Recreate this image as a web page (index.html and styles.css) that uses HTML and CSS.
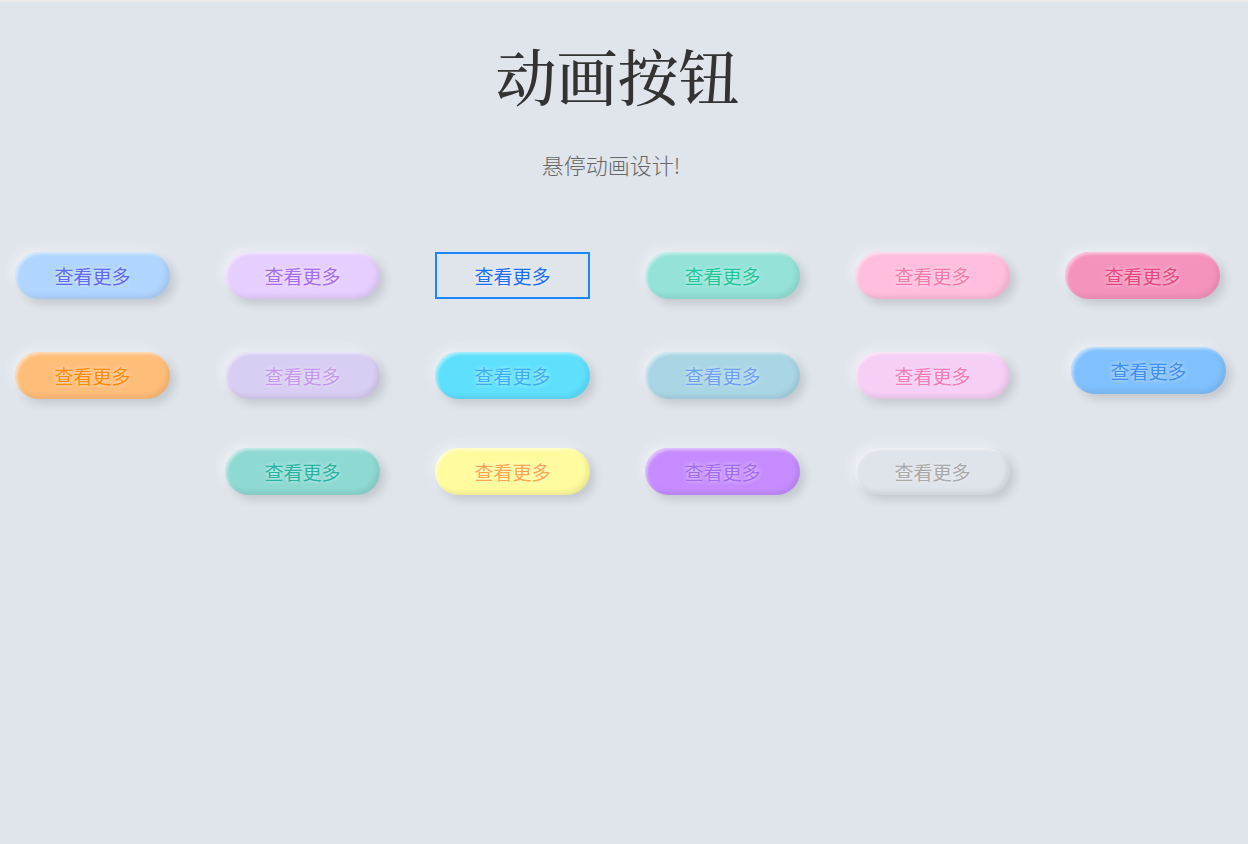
FILE: index.html
```html
<!DOCTYPE html>
<html lang="zh-CN">
<head>
  <meta charset="UTF-8">
  <meta name="viewport" content="width=device-width, initial-scale=1.0">
  <title>动画按钮</title>
  <link rel="stylesheet" href="styles.css">
</head>
<body>
  <div class="header">
    <h1 class="title">动画按钮</h1>
    <p class="subtitle">悬停动画设计!</p>
  </div>

  <div class="buttons">
    <div class="row">
      <button class="btn btn-blue">查看更多</button>
      <button class="btn btn-violet">查看更多</button>
      <button class="btn btn-outline">查看更多</button>
      <button class="btn btn-teal">查看更多</button>
      <button class="btn btn-pink">查看更多</button>
      <button class="btn btn-rose">查看更多</button>
    </div>
    <div class="row row-2">
      <button class="btn btn-orange">查看更多</button>
      <button class="btn btn-lavender">查看更多</button>
      <button class="btn btn-cyan">查看更多</button>
      <button class="btn btn-steel">查看更多</button>
      <button class="btn btn-orchid">查看更多</button>
      <button class="btn btn-sky btn-lift">查看更多</button>
    </div>
    <div class="row row-3">
      <button class="btn btn-mint">查看更多</button>
      <button class="btn btn-yellow">查看更多</button>
      <button class="btn btn-purple">查看更多</button>
      <button class="btn btn-gray">查看更多</button>
    </div>
  </div>
</body>
</html>
```

FILE: styles.css
```css
body {
  margin: 0;
  padding: 0;
  border-top: 2px solid #ebebeb;
  background-color: #e0e5ec;
  font-family: "Noto Sans CJK SC", "Noto Sans", sans-serif;
  min-height: 842px;
}
.header {
  text-align: center;
  padding: 33px 13px 0 0;
}
.title {
  margin: 0;
  font-family: "Noto Serif CJK SC", "Liberation Serif", "Noto Sans CJK SC", serif;
  font-size: 61px;
  font-weight: 500;
  line-height: 80px;
  color: #333;
}
.subtitle {
  margin: 34px 0 0;
  padding-right: 13px;
  font-size: 22px;
  font-weight: 300;
  line-height: 30px;
  color: #666;
}
.buttons {
  padding: 73px 0 0 15px;
}
.row {
  display: flex;
  gap: 55px;
  margin-bottom: 53px;
}
.row-2 {
  margin-bottom: 49px;
}
.row-3 {
  padding-left: 210px;
}
.btn {
  width: 155px;
  height: 47px;
  padding: 0;
  border: none;
  border-radius: 24px;
  font-family: "Noto Sans CJK SC", sans-serif;
  font-size: 19px;
  font-weight: 400;
  cursor: pointer;
  text-shadow: 0 0 4px rgba(255, 255, 255, 0.7);
  box-shadow: 5px 5px 10px rgba(0, 0, 0, 0.13),
              -4px -4px 10px rgba(255, 255, 255, 0.4),
              inset 2px 2px 3px rgba(255, 255, 255, 0.5),
              inset -3px -3px 5px rgba(0, 0, 0, 0.08);
}
.btn-lift {
  transform: translate(6px, -5px);
}
.btn-outline {
  background: transparent;
  border: 2px solid #1a86fb;
  border-radius: 0;
  color: #1a6ff4;
  box-shadow: none;
}
.btn-blue { background: #b0d5fe; color: #6168f4; }
.btn-violet { background: #e6cfff; color: #a56cf0; }
.btn-teal { background: #94e2d8; color: #1fc69a; }
.btn-pink { background: #ffbedd; color: #f57aa8; }
.btn-rose { background: #f693bc; color: #e6477f; }
.btn-orange { background: #ffbd7a; color: #ff8a00; }
.btn-lavender { background: #d8cdf3; color: #c597ee; }
.btn-cyan { background: #5ee0fd; color: #3aaef4; }
.btn-steel { background: #a9d5e4; color: #6f9ff5; }
.btn-orchid { background: #f5cff5; color: #f57ab5; }
.btn-sky { background: #80c0fe; color: #3d8ef0; }
.btn-mint { background: #8ed9d2; color: #27b3a3; }
.btn-yellow { background: #fffb9e; color: #ffa64d; }
.btn-purple { background: #c68cff; color: #a36bef; }
.btn-gray { background: #dfe3ea; color: #a8a8a8; }
```
